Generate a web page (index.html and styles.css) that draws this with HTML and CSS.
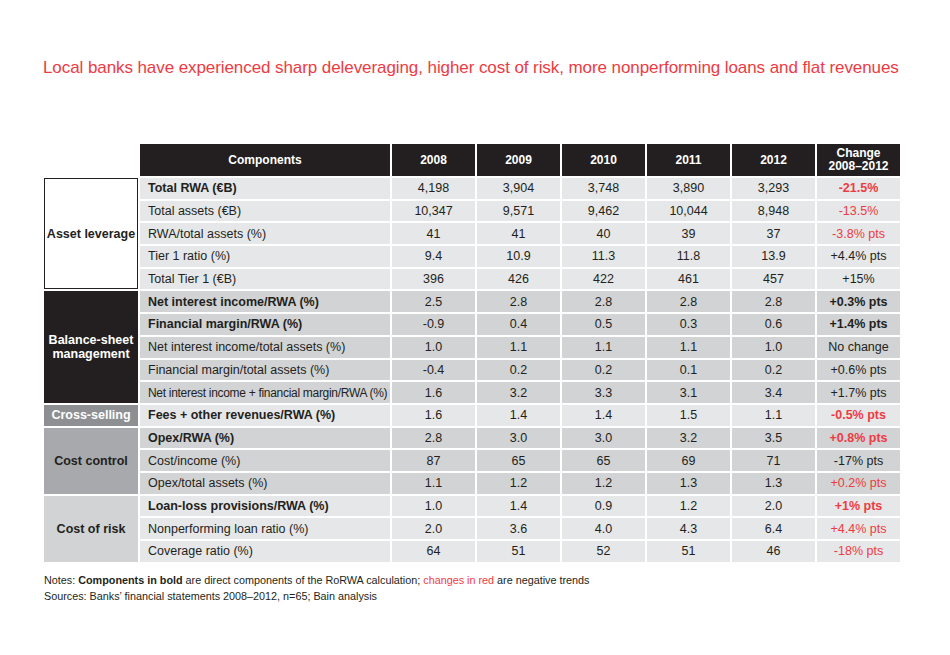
FILE: index.html
```html
<!DOCTYPE html>
<html lang="en">
<head>
<meta charset="utf-8">
<title>Local banks</title>
<link rel="stylesheet" href="styles.css">
</head>
<body>
<div class="page">
  <h1 class="title">Local banks have experienced sharp deleveraging, higher cost of risk, more nonperforming loans and flat revenues</h1>

  <div class="table">
    <div class="row head">
      <div class="blank"></div>
      <div class="comp">Components</div>
      <div>2008</div><div>2009</div><div>2010</div><div>2011</div><div>2012</div>
      <div class="chg">Change<br>2008–2012</div>
    </div>

    <div class="row light b">
      <div class="cat span5 cat-asset">Asset leverage</div>
      <div class="comp">Total RWA (€B)</div>
      <div>4,198</div><div>3,904</div><div>3,748</div><div>3,890</div><div>3,293</div>
      <div class="chg neg">-21.5%</div>
    </div>
    <div class="row light">
      <div class="comp">Total assets (€B)</div>
      <div>10,347</div><div>9,571</div><div>9,462</div><div>10,044</div><div>8,948</div>
      <div class="chg neg">-13.5%</div>
    </div>
    <div class="row light">
      <div class="comp">RWA/total assets (%)</div>
      <div>41</div><div>41</div><div>40</div><div>39</div><div>37</div>
      <div class="chg neg">-3.8% pts</div>
    </div>
    <div class="row light">
      <div class="comp">Tier 1 ratio (%)</div>
      <div>9.4</div><div>10.9</div><div>11.3</div><div>11.8</div><div>13.9</div>
      <div class="chg">+4.4% pts</div>
    </div>
    <div class="row light">
      <div class="comp">Total Tier 1 (€B)</div>
      <div>396</div><div>426</div><div>422</div><div>461</div><div>457</div>
      <div class="chg">+15%</div>
    </div>

    <div class="row dark b">
      <div class="cat span5 cat-balance">Balance-sheet<br>management</div>
      <div class="comp">Net interest income/RWA (%)</div>
      <div>2.5</div><div>2.8</div><div>2.8</div><div>2.8</div><div>2.8</div>
      <div class="chg">+0.3% pts</div>
    </div>
    <div class="row dark b">
      <div class="comp">Financial margin/RWA (%)</div>
      <div>-0.9</div><div>0.4</div><div>0.5</div><div>0.3</div><div>0.6</div>
      <div class="chg">+1.4% pts</div>
    </div>
    <div class="row dark">
      <div class="comp">Net interest income/total assets (%)</div>
      <div>1.0</div><div>1.1</div><div>1.1</div><div>1.1</div><div>1.0</div>
      <div class="chg">No change</div>
    </div>
    <div class="row dark">
      <div class="comp">Financial margin/total assets (%)</div>
      <div>-0.4</div><div>0.2</div><div>0.2</div><div>0.1</div><div>0.2</div>
      <div class="chg">+0.6% pts</div>
    </div>
    <div class="row dark">
      <div class="comp tight">Net interest income + financial margin/RWA (%)</div>
      <div>1.6</div><div>3.2</div><div>3.3</div><div>3.1</div><div>3.4</div>
      <div class="chg">+1.7% pts</div>
    </div>

    <div class="row light b">
      <div class="cat cat-cross">Cross-selling</div>
      <div class="comp">Fees + other revenues/RWA (%)</div>
      <div>1.6</div><div>1.4</div><div>1.4</div><div>1.5</div><div>1.1</div>
      <div class="chg neg">-0.5% pts</div>
    </div>

    <div class="row dark b">
      <div class="cat span3 cat-cost">Cost control</div>
      <div class="comp">Opex/RWA (%)</div>
      <div>2.8</div><div>3.0</div><div>3.0</div><div>3.2</div><div>3.5</div>
      <div class="chg neg">+0.8% pts</div>
    </div>
    <div class="row dark">
      <div class="comp">Cost/income (%)</div>
      <div>87</div><div>65</div><div>65</div><div>69</div><div>71</div>
      <div class="chg">-17% pts</div>
    </div>
    <div class="row dark">
      <div class="comp">Opex/total assets (%)</div>
      <div>1.1</div><div>1.2</div><div>1.2</div><div>1.3</div><div>1.3</div>
      <div class="chg neg">+0.2% pts</div>
    </div>

    <div class="row light b">
      <div class="cat span3 cat-risk">Cost of risk</div>
      <div class="comp">Loan-loss provisions/RWA (%)</div>
      <div>1.0</div><div>1.4</div><div>0.9</div><div>1.2</div><div>2.0</div>
      <div class="chg neg">+1% pts</div>
    </div>
    <div class="row light">
      <div class="comp">Nonperforming loan ratio (%)</div>
      <div>2.0</div><div>3.6</div><div>4.0</div><div>4.3</div><div>6.4</div>
      <div class="chg neg">+4.4% pts</div>
    </div>
    <div class="row light">
      <div class="comp">Coverage ratio (%)</div>
      <div>64</div><div>51</div><div>52</div><div>51</div><div>46</div>
      <div class="chg neg">-18% pts</div>
    </div>
  </div>

  <div class="notes">
    <p>Notes: <strong>Components in bold</strong> are direct components of the RoRWA calculation; <span class="red">changes in red</span> are negative trends</p>
    <p>Sources: Banks’ financial statements 2008–2012, n=65; Bain analysis</p>
  </div>
</div>
</body>
</html>
```

FILE: styles.css
```css
html, body {
  margin: 0;
  padding: 0;
  background: #ffffff;
}

.page {
  width: 950px;
  height: 655px;
  font-family: "Liberation Sans", Arial, sans-serif;
  color: #231f20;
  overflow: hidden;
}

.title {
  margin: 57px 0 0 43px;
  font-size: 17px;
  line-height: 22px;
  letter-spacing: -0.08px;
  font-weight: normal;
  color: #ee3b43;
  white-space: nowrap;
}

.table {
  margin: 65px 0 0 44px;
  display: grid;
  grid-template-columns: 94px 250px repeat(6, 83px);
  grid-template-rows: 32px;
  grid-auto-rows: 20.7px;
  column-gap: 2px;
  row-gap: 2px;
  font-size: 12.5px;
}

.row {
  display: contents;
}

.row > div {
  display: flex;
  align-items: center;
  justify-content: center;
  white-space: nowrap;
}

.row > .comp {
  grid-column: 2;
  justify-content: flex-start;
  padding-left: 8px;
}

.row > .cat {
  grid-column: 1;
  text-align: center;
  font-weight: bold;
  line-height: 14px;
}

.span5 { grid-row: span 5; }
.span3 { grid-row: span 3; }

.head > div {
  background: #231f20;
  color: #ffffff;
  font-weight: bold;
  font-size: 12px;
  line-height: 13px;
  text-align: center;
}

.head > .comp {
  justify-content: center;
  padding-left: 0;
}

.head > .blank {
  background: transparent;
}

.light > div { background: #e6e7e8; }
.dark > div { background: #d1d3d4; }

.b > .comp,
.b > .chg { font-weight: bold; }

.row > .chg.neg { color: #ee3b43; }

.row > .cat-asset {
  background: #ffffff;
  border: 1px solid #231f20;
  color: #231f20;
}
.row > .cat-balance {
  background: #231f20;
  color: #ffffff;
}
.row > .cat-cross {
  background: #8d8f92;
  color: #ffffff;
}
.row > .cat-cost {
  background: #a7a9ac;
  color: #231f20;
}
.row > .cat-risk {
  background: #d1d3d4;
  color: #231f20;
}

.row > .tight {
  font-size: 12px;
  letter-spacing: -0.3px;
}

.notes {
  margin: 10px 0 0 44px;
  font-size: 10.8px;
  line-height: 16px;
}

.notes p {
  margin: 0;
}

.notes .red {
  color: #ee3b43;
}
```
